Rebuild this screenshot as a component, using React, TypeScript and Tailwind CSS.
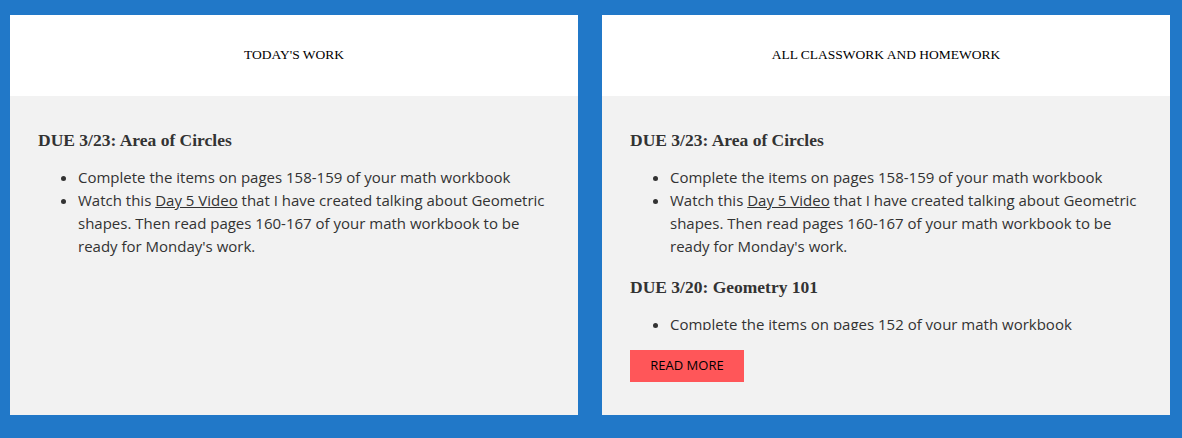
import React from 'react';

type Item = {title: string; bullets: React.ReactNode[]};

const current: Item = {
    title: 'DUE 3/23: Area of Circles',
    bullets: [
        'Complete the items on pages 158-159 of your math workbook',
        <>Watch this <a href="#" className="underline">Day 5 Video</a> that I have created talking about Geometric shapes. Then read pages 160-167 of your math workbook to be ready for Monday's work.</>,
    ],
};

const older: Item = {
    title: 'DUE 3/20: Geometry 101',
    bullets: ['Complete the items on pages 152 of your math workbook'],
};

function Assignment({item, first}: {item: Item; first?: boolean}) {
    return (
        <div className={first ? '' : 'mt-[17px]'}>
            <h3 className="text-[17.5px] leading-[24px] font-bold text-[#333]"
                style={{fontFamily: '"Liberation Serif", "DejaVu Serif", serif'}}>
                {item.title}
            </h3>
            <ul className="list-disc pl-10 mt-[14px] text-[15px] leading-[23px] text-[#333]">
                {item.bullets.map((b, i) => <li key={i}>{b}</li>)}
            </ul>
        </div>
    );
}

function Card({title, items, more}: {title: string; items: Item[]; more?: boolean}) {
    return (
        <div className="flex-1 h-[400px] flex flex-col">
            <div className="h-[81px] bg-white flex items-center justify-center">
                <span className="text-[13.5px] text-black uppercase"
                      style={{fontFamily: '"Liberation Serif", serif'}}>{title}</span>
            </div>
            <div className="flex-1 bg-[#f2f2f2] px-7 pt-8" style={{fontFamily: '"Open Sans", sans-serif'}}>
                <div className="max-h-[202px] overflow-hidden">
                    {items.map((it, i) => <Assignment key={i} item={it} first={i === 0}/>)}
                </div>
                {more && (
                    <button className="mt-5 h-8 w-[114px] bg-[#ff5659] text-[13px] text-black uppercase">
                        Read More
                    </button>
                )}
            </div>
        </div>
    );
}

export default function App() {
    return (
        <div className="w-[1182px] h-[438px] bg-[#2178c8] pt-[15px] pl-[10px] pr-[12px] flex gap-6">
            <Card title="Today's Work" items={[current]}/>
            <Card title="All Classwork and Homework" items={[current, older]} more/>
        </div>
    );
}
